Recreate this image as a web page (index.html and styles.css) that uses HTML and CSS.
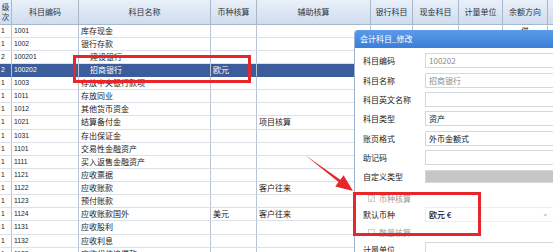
FILE: index.html
```html
<!DOCTYPE html>
<html lang="zh">
<head>
<meta charset="utf-8">
<link rel="stylesheet" href="styles.css">
</head>
<body>
<div class="page">
  <div class="grid">
    <div class="row head">
      <div class="c lv"><span>级</span><span>次</span></div>
      <div class="c">科目编码</div>
      <div class="c">科目名称</div>
      <div class="c">币种核算</div>
      <div class="c">辅助核算</div>
      <div class="c">银行科目</div>
      <div class="c">现金科目</div>
      <div class="c">计量单位</div>
      <div class="c">余额方向</div>
      <div class="c"></div>
    </div>
    <div class="row"><div class="c n">1</div><div class="c n">1001</div><div class="c">库存现金</div><div class="c"></div><div class="c"></div><div class="c"></div><div class="c"></div><div class="c"></div><div class="c mid">借</div><div class="c"></div></div>
    <div class="row"><div class="c n">1</div><div class="c n">1002</div><div class="c">银行存款</div><div class="c"></div><div class="c"></div><div class="c"></div><div class="c"></div><div class="c"></div><div class="c mid">借</div><div class="c"></div></div>
    <div class="row"><div class="c n">2</div><div class="c n">100201</div><div class="c ind">建设银行</div><div class="c"></div><div class="c"></div><div class="c"></div><div class="c"></div><div class="c"></div><div class="c mid">借</div><div class="c"></div></div>
    <div class="row sel"><div class="c n">2</div><div class="c n">100202</div><div class="c ind">招商银行</div><div class="c">欧元</div><div class="c"></div><div class="c"></div><div class="c"></div><div class="c"></div><div class="c mid">借</div><div class="c"></div></div>
    <div class="row"><div class="c n">1</div><div class="c n">1003</div><div class="c">存放中央银行款项</div><div class="c"></div><div class="c"></div><div class="c"></div><div class="c"></div><div class="c"></div><div class="c mid">借</div><div class="c"></div></div>
    <div class="row"><div class="c n">1</div><div class="c n">1011</div><div class="c">存放同业</div><div class="c"></div><div class="c"></div><div class="c"></div><div class="c"></div><div class="c"></div><div class="c mid">借</div><div class="c"></div></div>
    <div class="row"><div class="c n">1</div><div class="c n">1012</div><div class="c">其他货币资金</div><div class="c"></div><div class="c"></div><div class="c"></div><div class="c"></div><div class="c"></div><div class="c mid">借</div><div class="c"></div></div>
    <div class="row"><div class="c n">1</div><div class="c n">1021</div><div class="c">结算备付金</div><div class="c"></div><div class="c">项目核算</div><div class="c"></div><div class="c"></div><div class="c"></div><div class="c mid">借</div><div class="c"></div></div>
    <div class="row"><div class="c n">1</div><div class="c n">1031</div><div class="c">存出保证金</div><div class="c"></div><div class="c"></div><div class="c"></div><div class="c"></div><div class="c"></div><div class="c mid">借</div><div class="c"></div></div>
    <div class="row"><div class="c n">1</div><div class="c n">1101</div><div class="c">交易性金融资产</div><div class="c"></div><div class="c"></div><div class="c"></div><div class="c"></div><div class="c"></div><div class="c mid">借</div><div class="c"></div></div>
    <div class="row"><div class="c n">1</div><div class="c n">1111</div><div class="c">买入返售金融资产</div><div class="c"></div><div class="c"></div><div class="c"></div><div class="c"></div><div class="c"></div><div class="c mid">借</div><div class="c"></div></div>
    <div class="row"><div class="c n">1</div><div class="c n">1121</div><div class="c">应收票据</div><div class="c"></div><div class="c"></div><div class="c"></div><div class="c"></div><div class="c"></div><div class="c mid">借</div><div class="c"></div></div>
    <div class="row"><div class="c n">1</div><div class="c n">1122</div><div class="c">应收账款</div><div class="c"></div><div class="c">客户往来</div><div class="c"></div><div class="c"></div><div class="c"></div><div class="c mid">借</div><div class="c"></div></div>
    <div class="row"><div class="c n">1</div><div class="c n">1123</div><div class="c">预付账款</div><div class="c"></div><div class="c"></div><div class="c"></div><div class="c"></div><div class="c"></div><div class="c mid">借</div><div class="c"></div></div>
    <div class="row"><div class="c n">1</div><div class="c n">1124</div><div class="c">应收账款国外</div><div class="c">美元</div><div class="c">客户往来</div><div class="c"></div><div class="c"></div><div class="c"></div><div class="c mid">借</div><div class="c"></div></div>
    <div class="row"><div class="c n">1</div><div class="c n">1131</div><div class="c">应收股利</div><div class="c"></div><div class="c"></div><div class="c"></div><div class="c"></div><div class="c"></div><div class="c mid">借</div><div class="c"></div></div>
    <div class="row"><div class="c n">1</div><div class="c n">1132</div><div class="c">应收利息</div><div class="c"></div><div class="c"></div><div class="c"></div><div class="c"></div><div class="c"></div><div class="c mid">借</div><div class="c"></div></div>
    <div class="row"><div class="c n">1</div><div class="c n">1133</div><div class="c">应收代位追偿款</div><div class="c"></div><div class="c"></div><div class="c"></div><div class="c"></div><div class="c"></div><div class="c mid">借</div><div class="c"></div></div>
  </div>

  <div class="dialog">
    <div class="title">会计科目_修改</div>
    <div class="body">
      <div class="field"><span class="lbl">科目编码</span><span class="inp dis">100202</span></div>
      <div class="field"><span class="lbl">科目名称</span><span class="inp dis">招商银行</span></div>
      <div class="field"><span class="lbl">科目英文名称</span><span class="inp"></span></div>
      <div class="field"><span class="lbl">科目类型</span><span class="inp">资产</span></div>
      <div class="field"><span class="lbl">账页格式</span><span class="inp">外币金额式</span></div>
      <div class="field"><span class="lbl">助记码</span><span class="inp"></span></div>
      <div class="field"><span class="lbl">自定义类型</span><span class="inp gray"></span></div>
      <div class="check first"><span class="box">✓</span><span>币种核算</span></div>
      <div class="field sm"><span class="lbl">默认币种</span><span class="inp sel-box"><span class="cur">欧元&nbsp;€</span><span class="arrow">⌄</span></span></div>
      <div class="check second"><span class="box"></span><span>数量核算</span></div>
      <div class="field sm last"><span class="lbl">计量单位</span><span class="inp"></span></div>
    </div>
  </div>

  <div class="mark mark1"></div>
  <div class="mark mark2"></div>
  <svg class="arrow-svg" width="553" height="252" viewBox="0 0 553 252">
    <polygon fill="#e8262a" points="305,155 340.3,179.7 343.6,175.3 353,191 335.2,186.5 338.5,182.1"/>
  </svg>
</div>
</body>
</html>
```

FILE: styles.css
```css
html, body {
  margin: 0;
  padding: 0;
  width: 553px;
  height: 252px;
  overflow: hidden;
  background: #fff;
}
.page {
  position: relative;
  width: 553px;
  height: 252px;
  overflow: hidden;
  font-family: "Noto Sans CJK SC", "Liberation Sans", sans-serif;
  font-size: 8px;
  color: #222;
}
.grid {
  display: flex;
  flex-direction: column;
}
.row {
  display: grid;
  grid-template-columns: 12px 67px 132px 46px 114px 42px 46px 44px 45px 40px;
  height: 13.125px;
  background: #fff;
}
.row .c {
  box-sizing: border-box;
  border-right: 1px solid #b9c3d3;
  border-bottom: 1px solid #dde2ea;
  padding-left: 2px;
  line-height: 12px;
  white-space: nowrap;
  overflow: hidden;
}
.row .c.n {
  font-family: "Liberation Sans", sans-serif;
  font-size: 6.8px;
  padding-left: 2px;
}
.row .c:first-child { padding-left: 1px; }
.row .c.ind { padding-left: 11px; }
.row .c.mid { text-align: center; padding-left: 0; }
.row.head {
  height: 24.5px;
  background: linear-gradient(#e9f0f9, #cfdcee);
}
.row.head .c {
  border-right: 1px solid #a9b7cb;
  border-bottom: 1px solid #a9b7cb;
  text-align: center;
  padding: 0;
  line-height: 24px;
  color: #2c3440;
}
.row.head .c.lv {
  display: flex;
  flex-direction: column;
  align-items: center;
  justify-content: center;
  line-height: 10px;
  font-size: 7.5px;
  padding: 0;
}
.row.sel { background: #3b5d9c; }
.row.sel .c { color: #fff; border-bottom-color: #3b5d9c; }

.dialog {
  position: absolute;
  left: 354px;
  top: 30px;
  width: 230px;
  height: 240px;
  background: #fff;
  border-left: 1px solid #9fb4d2;
  border-top-left-radius: 4px;
  overflow: hidden;
  display: flex;
  flex-direction: column;
}
.title {
  height: 18px;
  line-height: 18px;
  padding-left: 5px;
  color: #fff;
  font-size: 8px;
  background: linear-gradient(#5a9be8, #3a7ed8);
}
.body {
  display: flex;
  flex-direction: column;
  padding: 3.3px 0 0 8px;
}
.field {
  display: flex;
  align-items: center;
  height: 19.3px;
}
.field.sm { height: 16px; }
.field.last { margin-top: 1px; }
.lbl {
  width: 62px;
  flex: none;
  color: #222;
}
.inp {
  box-sizing: border-box;
  flex: 1;
  height: 15px;
  line-height: 13px;
  border: 1px solid #d3d8e0;
  padding-left: 3px;
  color: #111;
  display: flex;
  align-items: center;
}
.inp.dis { color: #8a8a8a; }
.inp.gray { background: #c6c6c6; border-color: #d8d8d8; height: 13px; }
.inp.sel-box {
  border-color: #eceef2;
}
.cur { color: #111; font-weight: 500; }
.arrow {
  color: #aaa;
  font-size: 8px;
  line-height: 8px;
  margin-left: 91px;
  margin-top: -3px;
}
.check {
  display: flex;
  align-items: center;
  height: 15px;
  padding-left: 5px;
  gap: 4px;
  color: #9a9a9a;
}
.check.first { margin-top: 5px; }
.check.second { margin-top: 3px; }
.box {
  box-sizing: border-box;
  width: 7px;
  height: 7px;
  border: 1px solid #d0d0d0;
  font-size: 6px;
  line-height: 5px;
  text-align: center;
  color: #aaa;
}

.mark {
  position: absolute;
  box-sizing: border-box;
  border: 3px solid #e8262a;
}
.mark1 { left: 73px; top: 55px; width: 178px; height: 28px; }
.mark2 { left: 353px; top: 192px; width: 128px; height: 44px; }
.arrow-svg {
  position: absolute;
  left: 0;
  top: 0;
}
```
